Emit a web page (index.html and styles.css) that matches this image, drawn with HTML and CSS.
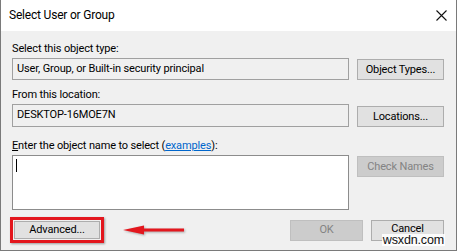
FILE: index.html
```html
<!DOCTYPE html>
<html>
<head>
<meta charset="utf-8">
<link rel="stylesheet" href="styles.css">
</head>
<body>
<div class="window">
  <div class="titlebar">
    <span class="title">Select User or Group</span>
    <svg class="close" width="11" height="11" viewBox="0 0 11 11"><path d="M0.5 0.5 L10.5 10.5 M10.5 0.5 L0.5 10.5" stroke="#111" stroke-width="1.1" fill="none"/></svg>
  </div>
  <div class="content">
    <div class="row">
      <div class="field">
        <div class="label">Select this object type:</div>
        <div class="readonly">User, Group, or Built-in security principal</div>
      </div>
      <div class="btn">Object Types...</div>
    </div>
    <div class="row r2">
      <div class="field">
        <div class="label">From this location:</div>
        <div class="readonly tall">DESKTOP-16MOE7N</div>
      </div>
      <div class="btn">Locations...</div>
    </div>
    <div class="row r3">
      <div class="field">
        <div class="label"><u>E</u>nter the object name to select (<a class="link">examples</a>):</div>
        <div class="textarea"><span class="caret"></span></div>
      </div>
      <div class="btn disabled">Check Names</div>
    </div>
    <div class="footer">
      <div class="highlight"><div class="btn adv">Advanced...</div></div>
      <svg class="arrow" width="66" height="12" viewBox="0 0 66 12"><path d="M20 4.5 H62 V7.5 H20 Z" fill="#e3171e"/><path d="M1 6 L22 1.5 L22 10.5 Z" fill="#e3171e"/></svg>
      <div class="spacer"></div>
      <div class="btn disabled small">OK</div>
      <div class="btn small cancel">Cancel</div>
    </div>
  </div>
  <div class="watermark">wsxdn.com</div>
</div>
</body>
</html>
```
FILE: styles.css
```css
* { box-sizing: border-box; }
html, body { margin: 0; padding: 0; background: #fff; }
body { font-family: Roboto, "Liberation Sans", sans-serif; font-size: 11px; letter-spacing: -0.15px; color: #000; }
.window {
  position: relative;
  width: 457px; height: 251px;
  border-left: 1px solid #7a7a7a; border-right: 1px solid #7a7a7a; border-bottom: 1px solid #7a7a7a;
  display: flex; flex-direction: column;
  overflow: hidden;
}
.titlebar {
  height: 31px; background: #fff;
  display: flex; align-items: center; justify-content: space-between;
  padding: 0 9px 2px 8px;
}
.title { font-size: 12px; letter-spacing: -0.2px; }
.close { margin-top: 2px; }
.content {
  flex: 1; background: #f0f0f0;
  padding: 10px 12px 0 11px;
  display: flex; flex-direction: column;
}
.row { display: flex; align-items: flex-end; gap: 8px; }
.field { width: 337px; display: flex; flex-direction: column; }
.label { height: 17px; line-height: 15px; padding-left: 0; }
.readonly {
  height: 22px; border: 1px solid #a0a0a0; background: #f0f0f0;
  padding: 0 4px; line-height: 19px; white-space: nowrap;
}
.readonly.tall { height: 23px; line-height: 20px; }
.r2 { margin-top: 7px; }
.r3 { margin-top: 11px; align-items: flex-start; }
.r3 .btn { margin-top: 18px; }
.textarea { height: 55px; border: 1px solid #8c8c8c; background: #fff; padding: 3px 3px; }
.caret { display: block; width: 1px; height: 13px; background: #000; }
.link { color: #0066cc; text-decoration: underline; }
.btn {
  width: 87px; height: 21px; border: 1px solid #adadad; background: #e1e1e1;
  display: flex; align-items: center; justify-content: center;
  line-height: 1; white-space: nowrap; padding-bottom: 1px;
}
.btn.disabled { background: #cccccc; border-color: #bfbfbf; color: #838383; }
.footer { display: flex; align-items: center; margin-top: 7px; height: 26px; }
.highlight {
  border: 3px solid #e3171e; padding: 1px; margin-left: -2px;
  box-shadow: 1px 1px 2px rgba(0,0,0,0.35);
}
.btn.adv { width: 86px; height: 18px; margin: 0; }
.arrow { margin-left: 18px; filter: drop-shadow(1px 1px 1px rgba(0,0,0,0.3)); }
.spacer { flex: 1; }
.btn.small { width: 73px; height: 21px; margin-left: 8px; }
.btn.cancel { align-items: flex-start; padding-top: 2px; }
.watermark {
  position: absolute; right: 11px; bottom: 4px;
  font-family: "Liberation Sans", sans-serif; font-size: 12.5px;
  color: #111; background: rgba(255,255,255,0.85); padding: 0 1px; line-height: 12px;
}
```
